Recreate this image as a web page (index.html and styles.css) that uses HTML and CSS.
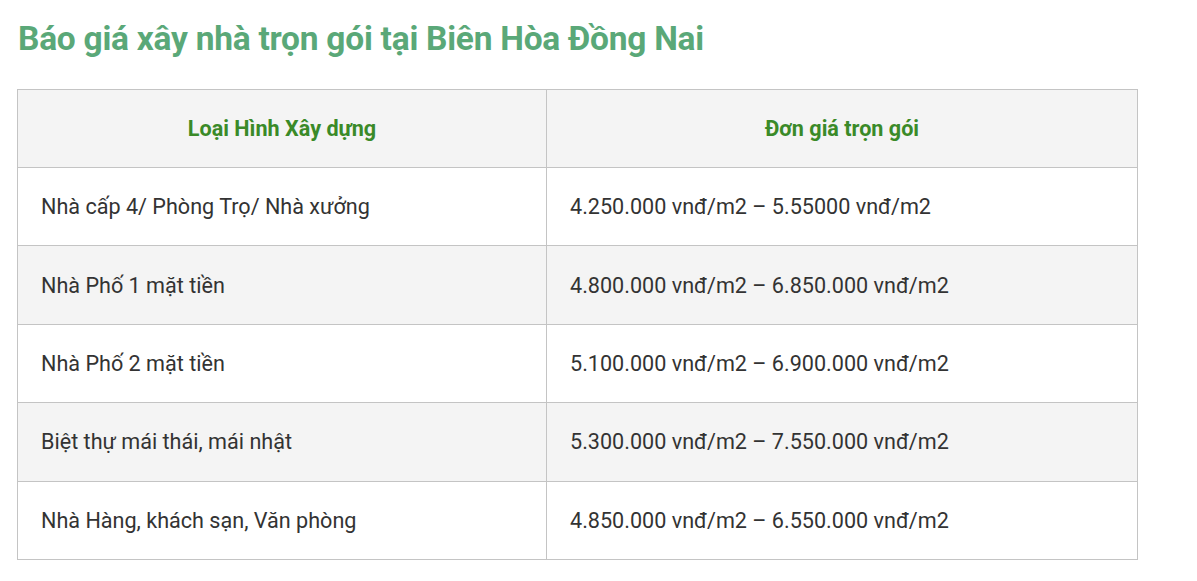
FILE: index.html
```html
<!DOCTYPE html>
<html lang="vi">
<head>
<meta charset="utf-8">
<title>Báo giá xây nhà trọn gói tại Biên Hòa Đồng Nai</title>
<link rel="stylesheet" href="styles.css">
</head>
<body>
<main class="page">
  <h2 class="title">Báo giá xây nhà trọn gói tại Biên Hòa Đồng Nai</h2>
  <table class="price-table">
    <thead>
      <tr>
        <th class="col-type">Loại Hình Xây dựng</th>
        <th>Đơn giá trọn gói</th>
      </tr>
    </thead>
    <tbody>
      <tr>
        <td>Nhà cấp 4/ Phòng Trọ/ Nhà xưởng</td>
        <td>4.250.000 vnđ/m2 – 5.55000 vnđ/m2</td>
      </tr>
      <tr class="alt">
        <td>Nhà Phố 1 mặt tiền</td>
        <td>4.800.000 vnđ/m2 – 6.850.000 vnđ/m2</td>
      </tr>
      <tr>
        <td>Nhà Phố 2 mặt tiền</td>
        <td>5.100.000 vnđ/m2 – 6.900.000 vnđ/m2</td>
      </tr>
      <tr class="alt">
        <td>Biệt thự mái thái, mái nhật</td>
        <td>5.300.000 vnđ/m2 – 7.550.000 vnđ/m2</td>
      </tr>
      <tr>
        <td>Nhà Hàng, khách sạn, Văn phòng</td>
        <td>4.850.000 vnđ/m2 – 6.550.000 vnđ/m2</td>
      </tr>
    </tbody>
  </table>
</main>
</body>
</html>
```
FILE: styles.css
```css
* { box-sizing: border-box; }
html, body { margin: 0; padding: 0; background: #fff; }
body {
  font-family: Roboto, "Liberation Sans", Arial, sans-serif;
  color: #333;
}
.page {
  padding: 17px 0 0 17px;
  width: 1138px;
}
.title {
  margin: 0 0 0 1px;
  font-size: 33.5px;
  line-height: 44px;
  font-weight: 700;
  color: #5aa878;
  letter-spacing: -0.25px;
}
.price-table {
  margin-top: 28px;
  width: 1121px;
  border-collapse: collapse;
  table-layout: fixed;
}
.price-table th,
.price-table td {
  border: 1px solid #c4c4c4;
  height: 78.4px;
  padding: 0 23px;
  vertical-align: middle;
  font-size: 21.6px;
}
.price-table th {
  height: 78px;
  background: #f4f4f4;
  color: #3a8a28;
  font-weight: 700;
  font-size: 21.6px;
  text-align: center;
}
.price-table .col-type { width: 529px; }
.price-table td {
  color: #333;
  text-align: left;
}
.price-table tr.alt td { background: #f4f4f4; }
```
